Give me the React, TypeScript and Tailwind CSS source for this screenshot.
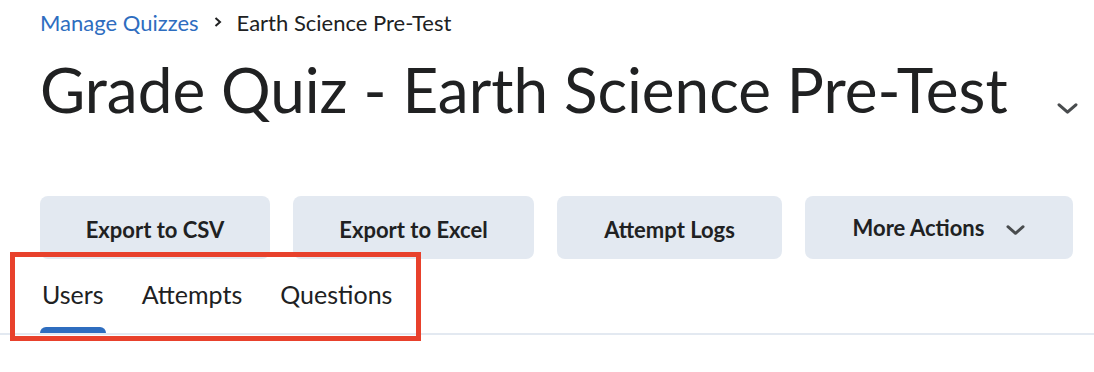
import React from 'react';

const ChevronDown = ({ className }: { className?: string }) => (
    <svg className={className} viewBox="0 0 20 10" fill="none">
        <path d="M2 1.5 L10 8.5 L18 1.5" stroke="#494c4e" strokeWidth="3" strokeLinecap="round" strokeLinejoin="round" />
    </svg>
);

const buttons = [
    { label: 'Export to CSV', w: 'w-[230px]' },
    { label: 'Export to Excel', w: 'w-[241px]' },
    { label: 'Attempt Logs', w: 'w-[225px]' },
];

const tabs = ['Users', 'Attempts', 'Questions'];

export default function App() {
    return (
        <div className="relative w-[1094px] h-[372px] overflow-hidden bg-white text-[#202122] font-['Lato','Noto_Sans',sans-serif]">
            {/* breadcrumb */}
            <nav className="flex items-center h-[44px] pl-10 text-[22px]">
                <a className="text-[#2e6dbf]">Manage Quizzes</a>
                <svg className="w-[8px] h-[10px] mx-[15px]" viewBox="0 0 8 10" fill="none">
                    <path d="M1.5 1 L6 5 L1.5 9" stroke="#202122" strokeWidth="2" />
                </svg>
                <span>Earth Science Pre-Test</span>
            </nav>

            {/* title */}
            <div className="flex items-start pl-10 pr-[16px] h-[110px]">
                <h1 className="text-[62px] leading-none pt-[14px]">Grade Quiz - Earth Science Pre-Test</h1>
                <ChevronDown className="ml-auto mt-[59px] w-[21px] h-[11px]" />
            </div>

            {/* actions */}
            <div className="flex gap-[23px] pl-10 mt-[42px]">
                {buttons.map((b) => (
                    <button key={b.label} className={`${b.w} h-[63px] rounded-[8px] bg-[#e3e9f1] text-[22px] font-bold pt-[4px]`}>
                        {b.label}
                    </button>
                ))}
                <button className="w-[268px] h-[63px] rounded-[8px] bg-[#e3e9f1] text-[22px] font-bold flex items-center justify-center gap-[22px]">
                    <span>More Actions</span>
                    <ChevronDown className="w-[19px] h-[10px] mt-[4px]" />
                </button>
            </div>

            {/* tabs */}
            <div className="pl-10 mt-[23px] border-b-2 border-[#e3e9f1]">
                <div className="flex gap-[34px] text-[25px]">
                    {tabs.map((t, i) => (
                        <div key={t} className="flex flex-col items-start">
                            <span className="px-[2px] leading-none">{t}</span>
                            <div className={`mt-[20px] h-[6px] w-full rounded-t-[6px] ${i === 0 ? 'bg-[#2e6dbf]' : ''}`} />
                        </div>
                    ))}
                </div>
            </div>

            {/* annotation */}
            <div className="absolute left-[10px] top-[252px] w-[411px] h-[89px] border-[5px] border-[#e8412c]" />
        </div>
    );
}
